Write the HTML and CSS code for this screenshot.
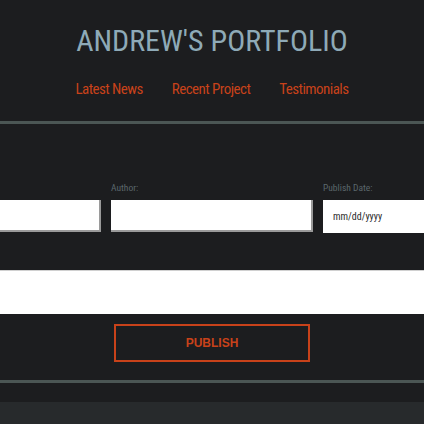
FILE: index.html
```html
<!DOCTYPE html>
<html>
<head>
<meta charset="utf-8">
<link rel="stylesheet" href="styles.css">
</head>
<body>
<header class="site-header">
  <h1 class="title">ANDREW'S PORTFOLIO</h1>
  <nav class="nav">
    <a class="nav-link" href="#">Latest News</a>
    <a class="nav-link" href="#">Recent Project</a>
    <a class="nav-link" href="#">Testimonials</a>
  </nav>
</header>
<main class="main">
  <form class="post-form">
    <div class="fields">
      <div class="field">
        <label class="label">&nbsp;</label>
        <input class="input" type="text">
      </div>
      <div class="field">
        <label class="label">Author:</label>
        <input class="input" type="text">
      </div>
      <div class="field">
        <label class="label">Publish Date:</label>
        <input class="input date" type="text" placeholder="mm/dd/yyyy">
      </div>
    </div>
    <textarea class="body-input"></textarea>
    <button class="publish" type="button">PUBLISH</button>
  </form>
</main>
<footer class="footer"></footer>
</body>
</html>
```
FILE: styles.css
```css
html, body {
  margin: 0;
  padding: 0;
  background: #1c1d1f;
  overflow: hidden;
  height: 424px;
}
body {
  font-family: "Roboto Condensed", Roboto, "Liberation Sans", sans-serif;
  display: flex;
  flex-direction: column;
}
.site-header {
  display: flex;
  flex-direction: column;
  align-items: center;
  border-bottom: 3px solid #4b5654;
  height: 121px;
}
.title {
  margin: 23px 0 0;
  font-size: 30px;
  font-weight: 400;
  line-height: 36px;
  color: #8eaab7;
}
.nav {
  display: flex;
  gap: 29px;
  margin-top: 20px;
}
.nav-link {
  color: #c8421a;
  text-decoration: none;
  font-size: 15px;
  letter-spacing: -0.55px;
  line-height: 20px;
}
.main {
  display: flex;
  flex-direction: column;
  align-items: center;
  border-bottom: 3px solid #4b5654;
  height: 256px;
}
.post-form {
  width: 626px;
  flex: none;
  display: flex;
  flex-direction: column;
  align-items: center;
  padding-top: 58px;
}
.fields {
  display: flex;
  gap: 10px;
  width: 100%;
}
.field {
  flex: 1;
  display: flex;
  flex-direction: column;
}
.label {
  font-size: 9.5px;
  line-height: 12px;
  color: #5b676c;
  margin-bottom: 6px;
}
.input {
  box-sizing: border-box;
  height: 32px;
  border: none;
  border-right: 2px solid #9a9a9a;
  border-bottom: 2px solid #9a9a9a;
  background: #fff;
  margin: 0;
  padding: 0 10px;
  font-family: inherit;
  font-size: 10px;
}
.input.date {
  height: 33px;
  border: none;
}
.input.date::placeholder {
  color: #2a2a2a;
}
.body-input {
  box-sizing: border-box;
  width: 100%;
  height: 44px;
  margin: 37px 0 0;
  border: none;
  border-top: 1px solid #d0d0d0;
  background: #fff;
  resize: none;
  display: block;
}
.publish {
  margin-top: 10px;
  width: 196px;
  height: 38px;
  background: transparent;
  border: 2px solid #c8421a;
  color: #c8421a;
  font-family: "Liberation Sans", Arial, sans-serif;
  font-weight: 700;
  font-size: 12px;
  padding: 0;
}
.footer {
  margin-top: 19px;
  flex: 1;
  background: #272a2c;
}
```
